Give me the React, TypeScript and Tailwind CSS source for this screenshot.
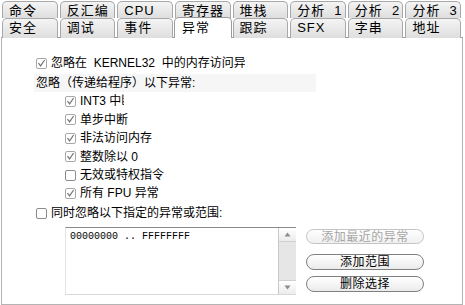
import React from "react"

const row1 = ["命令","反汇编","CPU","寄存器","堆栈","分析  1","分析  2","分析  3"]
const row2 = ["安全","调试","事件","异常","跟踪","SFX","字串","地址"]

const items = [
  {label:"INT3 中断", on:true, w:"w-[44px]", h:"h-[18px]"},
  {label:"单步中断", on:true, w:"w-[80px]", h:"h-[19px]"},
  {label:"非法访问内存", on:true, w:"w-[90px]", h:"h-[18px]"},
  {label:"整数除以 0", on:true, w:"w-[90px]", h:"h-[19px]"},
  {label:"无效或特权指令", on:false, w:"w-[100px]", h:"h-[18px]"},
  {label:"所有 FPU 异常", on:true, w:"w-[82px]", h:"h-[18px]"},
]

function Check({on}:{on:boolean}){
  return(
    <svg width="11" height="11" viewBox="0 0 11 11" className="shrink-0">
      <rect x="0.5" y="0.5" width="10" height="10" rx="1.5" fill="#fff" stroke={on ? "#a8a8a8" : "#8c8c8c"}/>
      {on && <path d="M2.5 5.2 L4.6 7.8 L8.6 2" fill="none" stroke="#7a7a7a" strokeWidth="1.3"/>}
    </svg>
  )
}

function Tab({label,selected}:{label:string,selected?:boolean}){
  return(
    <div
      className={
        selected
          ? "relative z-10 -mx-[1px] -mt-[1px] h-[21px] rounded-t-[5px] border border-b-0 border-[#9a9a9a] bg-white pl-[7px] pt-[2px] text-[13px] leading-[15px] tracking-[1px] text-black whitespace-pre"
          : "h-full rounded-t-[5px] border border-b-0 border-[#a8a8a8] bg-gradient-to-b from-[#f4f4f4] to-[#dedede] pl-[6px] pt-[1px] text-[13px] leading-[15px] tracking-[1px] text-black whitespace-pre overflow-hidden"
      }
    >
      {label}
    </div>
  )
}

export default function App(){

  return(

    <div className="w-[465px] h-[305px] bg-white overflow-hidden font-['Liberation_Sans','Noto_Sans_CJK_SC',sans-serif] text-black">

      <div className="grid grid-cols-8 gap-[2px] w-[459px] ml-[2px] mt-[1px] h-[17px]">
        {row1.map(t=>(
          <Tab key={t} label={t}/>
        ))}
      </div>

      <div className="grid grid-cols-8 gap-[2px] w-[459px] ml-[2px] h-[19px]">
        {row2.map(t=>(
          <Tab key={t} label={t} selected={t==="异常"}/>
        ))}
      </div>

      <div className="ml-[1px] w-[462px] h-[268px] border border-[#b4b4b4] border-t-[#9a9a9a] pl-[34px] text-[12px]">

        <div className="mt-[16px] h-[18px] flex items-center gap-[4px]">
          <Check on={true}/>
          <span className="w-[194px] overflow-hidden whitespace-pre">忽略在  KERNEL32  中的内存访问异常</span>
        </div>

        <div className="mt-[2px] h-[18px] w-[282px] -ml-[2px] pl-[2px] flex items-center bg-[#f6f6f6]">
          忽略（传递给程序）以下异常:
        </div>

        <div className="pl-[29px]">
          {items.map(it=>(
            <div key={it.label} className={it.h+" flex items-center gap-[4px]"}>
              <Check on={it.on}/>
              <span className={it.w+" overflow-hidden whitespace-pre"}>{it.label}</span>
            </div>
          ))}
        </div>

        <div className="mt-[2px] h-[18px] flex items-center gap-[4px]">
          <Check on={false}/>
          <span className="whitespace-pre">同时忽略以下指定的异常或范围:</span>
        </div>

        <div className="mt-[5px] ml-[29px] flex gap-[10px]">

          <div className="w-[231px] h-[68px] flex border-t border-t-[#8a8a8a] border-b border-b-[#d8d8d8] border-l border-l-[#e4e4e4]">
            <div className="flex-1 pl-[4px] pt-[3px] font-['Liberation_Mono',monospace] text-[10px] leading-[12px] whitespace-pre">
              00000000 .. FFFFFFFF
            </div>
            <div className="w-[18px] flex flex-col border-l border-[#c8c8c8] bg-[#e6e6e6]">
              <div className="h-[14px] bg-gradient-to-b from-white to-[#ececec] flex items-center justify-center border-b border-[#d0d0d0]">
                <svg width="7" height="5" viewBox="0 0 7 5"><path d="M3.5 0.5 L6.5 4.5 L0.5 4.5 Z" fill="#8c8c8c"/></svg>
              </div>
              <div className="flex-1"/>
              <div className="h-[14px] bg-gradient-to-b from-white to-[#ececec] flex items-center justify-center border-t border-[#d0d0d0]">
                <svg width="7" height="5" viewBox="0 0 7 5"><path d="M0.5 0.5 L6.5 0.5 L3.5 4.5 Z" fill="#8c8c8c"/></svg>
              </div>
            </div>
          </div>

          <div className="flex flex-col w-[118px]">
            <div className="mt-[2px] h-[15px] rounded-full border border-[#c4c4c4] bg-gradient-to-b from-white to-[#f0f0f0] flex items-center justify-center text-[12px] text-[#a6a6a6] tracking-[0.5px]">
              添加最近的异常
            </div>
            <div className="mt-[10px] h-[16px] rounded-full border border-[#808080] bg-gradient-to-b from-white to-[#ebebeb] flex items-center justify-center text-[12px] tracking-[0.5px]">
              添加范围
            </div>
            <div className="mt-[6px] h-[16px] rounded-full border border-[#808080] bg-gradient-to-b from-white to-[#ebebeb] flex items-center justify-center text-[12px] tracking-[0.5px]">
              删除选择
            </div>
          </div>

        </div>

      </div>

    </div>

  )

}
